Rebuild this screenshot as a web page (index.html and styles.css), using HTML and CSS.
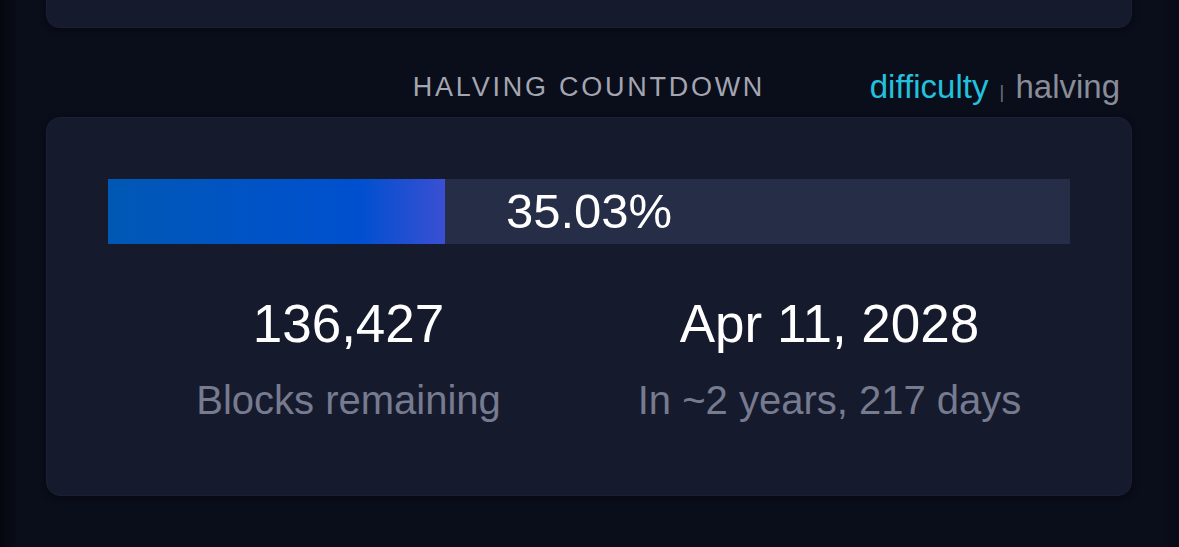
FILE: index.html
```html
<!DOCTYPE html>
<html lang="en">
<head>
    <meta charset="UTF-8">
    <meta name="viewport" content="width=device-width, initial-scale=1.0">
    <title>Halving Countdown</title>
    <link rel="stylesheet" href="styles.css">
</head>
<body>
    <div class="page">
        <div class="card card-top"></div>

        <div class="section-head">
            <h2 class="section-title">HALVING COUNTDOWN</h2>
            <div class="toggle">
                <a href="#" class="toggle-link active">difficulty</a>
                <span class="toggle-sep">|</span>
                <a href="#" class="toggle-link">halving</a>
            </div>
        </div>

        <div class="card countdown">
            <div class="progress">
                <div class="progress-fill" style="width: 35.03%"></div>
                <span class="progress-label">35.03%</span>
            </div>
            <div class="stats">
                <div class="stat">
                    <div class="stat-value">136,427</div>
                    <div class="stat-label">Blocks remaining</div>
                </div>
                <div class="stat">
                    <div class="stat-value">Apr 11, 2028</div>
                    <div class="stat-label">In ~2 years, 217 days</div>
                </div>
            </div>
        </div>
    </div>
</body>
</html>
```

FILE: styles.css
```css
* {
    box-sizing: border-box;
    margin: 0;
    padding: 0;
}

body {
    font-family: 'Liberation Sans', Arial, sans-serif;
    background: linear-gradient(90deg, #05070f 0px, #0a0d1a 18px, #0a0d1a 1160px, #080b16 100%);
    color: #fff;
    min-height: 100vh;
}

.page {
    padding: 0 47px 0 46px;
}

.card {
    background-color: #161a2d;
    border: 1px solid #1b1f35;
    border-radius: 14px;
    box-shadow: 0 2px 6px rgba(0, 0, 0, 0.35);
}

.card-top {
    height: 28px;
    border-top: none;
    border-radius: 0 0 14px 14px;
}

.section-head {
    display: grid;
    grid-template-columns: 1fr auto 1fr;
    align-items: baseline;
    padding: 43px 12px 9px 12px;
}

.section-title {
    grid-column: 2;
    font-size: 27px;
    line-height: 32px;
    font-weight: 400;
    letter-spacing: 2.75px;
    color: #a3a6b1;
    position: relative;
    top: -2px;
}

.toggle {
    grid-column: 3;
    justify-self: end;
    font-size: 33px;
    line-height: 32px;
}

.toggle-link {
    color: #898c99;
    text-decoration: none;
}

.toggle-link.active {
    color: #22c1df;
}

.toggle-sep {
    font-size: 18px;
    color: #6f7282;
    margin: 0 2px;
}

.countdown {
    padding: 61px 61px 71px 61px;
}

.progress {
    position: relative;
    height: 65px;
    background-color: #252d47;
    display: flex;
    align-items: center;
    justify-content: center;
}

.progress-fill {
    position: absolute;
    left: 0;
    top: 0;
    bottom: 0;
    background: linear-gradient(90deg, #0058b4 0%, #0053c6 45%, #0050cf 75%, #3b4fd3 100%);
}

.progress-label {
    position: relative;
    font-size: 49px;
    line-height: 65px;
    color: #fff;
}

.stats {
    display: grid;
    grid-template-columns: 1fr 1fr;
    margin-top: 50px;
    text-align: center;
}

.stat-value {
    font-size: 53px;
    line-height: 60px;
    color: #fff;
}

.stat-label {
    margin-top: 22px;
    font-size: 40px;
    line-height: 48px;
    color: #767b90;
}
```
